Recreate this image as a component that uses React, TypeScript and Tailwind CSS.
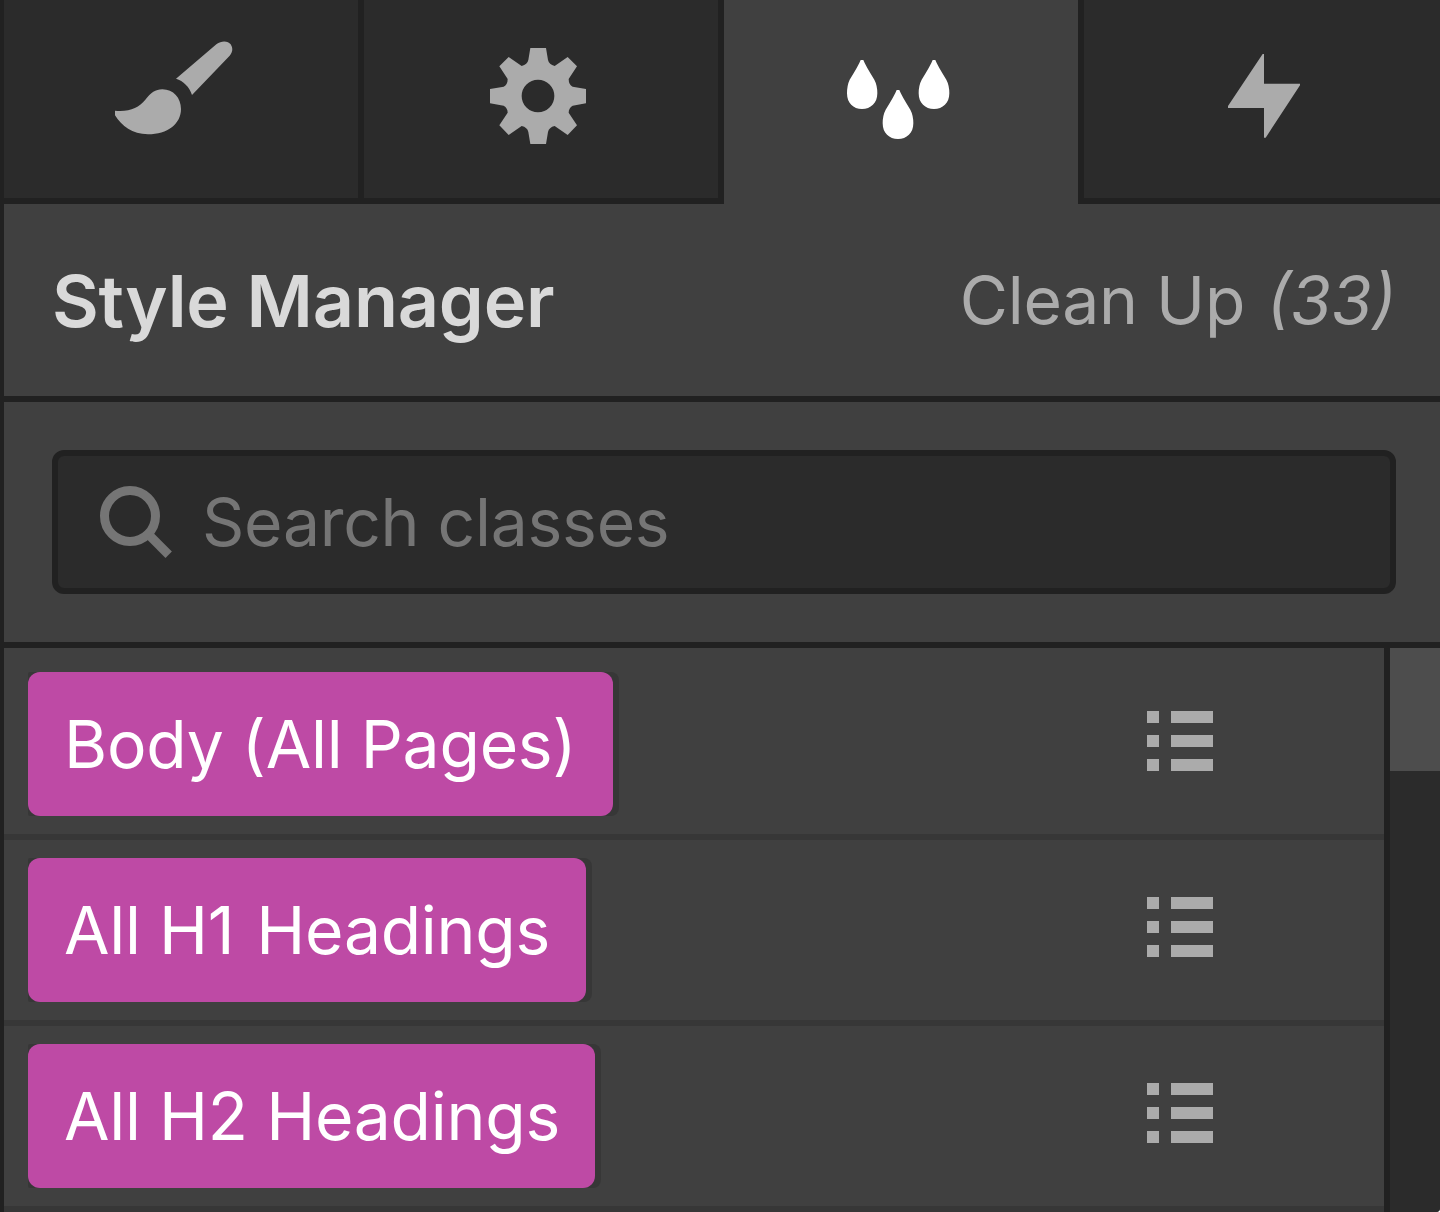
import React, { Fragment } from 'react';
import clsx from 'clsx';

interface StyleClass {
  id: number;
  name: string;
  width: number;
}

const classes: StyleClass[] = [
  { id: 1, name: 'Body (All Pages)', width: 585 },
  { id: 2, name: 'All H1 Headings', width: 558 },
  { id: 3, name: 'All H2 Headings', width: 567 },
];

const BrushIcon = () => (
  <svg viewBox="0 0 450 360" className="ml-[96px] mt-[30px] h-[120px] w-[150px]" fill="currentColor">
    <path d="M228 146L350 42C364 31 385 32 392 43C399 54 399 66 389 77L276 195C268 170 250 153 228 146Z" />
    <path d="M45 242C88 246 116 234 136 209C153 188 166 178 187 178C220 178 243 204 243 237C243 281 203 313 144 313C96 313 66 288 45 256Z" />
  </svg>
);

const GearIcon = () => (
  <svg viewBox="0 0 420 390" className="ml-[106px] mt-[30px] h-[130px] w-[140px]" fill="currentColor">
    <path
      fillRule="evenodd"
      d="M181 54H228L234 90Q237 104 254 108L293 81L321 109L296 147Q296 164 308 170L348 177V220L308 227Q296 234 296 248L321 286L293 315L254 288Q237 292 234 306L228 342H181L175 306Q172 292 155 288L116 315L88 286L113 248Q113 234 101 227L60 220V177L101 170Q113 164 113 147L88 109L116 81L155 108Q172 104 175 90ZM204 149A49 49 0 1 0 204 247A49 49 0 1 0 204 149Z"
    />
  </svg>
);

const DropsIcon = () => (
  <svg viewBox="0 0 420 360" className="ml-[106px] mt-[40px] h-[120px] w-[140px]" fill="currentColor">
    <path d="M92 60H100Q106 76 133 119Q142 136 142 160C142 190 122 207 96 207C70 207 51 190 51 160Q51 136 59 119Q86 76 92 60Z" />
    <path d="M308 60H316Q322 76 349 119Q358 136 358 160C358 190 338 207 312 207C286 207 266 190 266 160Q266 136 275 119Q302 76 308 60Z" />
    <path d="M200 150H208Q214 166 241 209Q250 226 250 250C250 280 230 297 204 297C178 297 158 280 158 250Q158 226 167 209Q194 166 200 150Z" />
  </svg>
);

const BoltIcon = () => (
  <svg viewBox="0 0 330 330" className="ml-[126px] mt-[40px] size-[110px]" fill="currentColor">
    <path d="M158 42H162V131H270V136L167 293H162V204H54V198Z" />
  </svg>
);

const SearchIcon = () => (
  <svg viewBox="0 0 72 72" className="size-[72px] shrink-0" fill="none" stroke="currentColor" strokeWidth="9">
    <circle cx="30" cy="30" r="25.5" />
    <path d="M50 50L68.7 68.7" />
  </svg>
);

const ListIcon = () => (
  <svg viewBox="0 0 66 60" className="h-[60px] w-[66px]" fill="currentColor">
    <path d="M0 0h12v12H0zM24 0h42v12H24zM0 24h12v12H0zM24 24h42v12H24zM0 48h12v12H0zM24 48h42v12H24z" />
  </svg>
);

const tabs = [
  { id: 'style', Icon: BrushIcon },
  { id: 'settings', Icon: GearIcon },
  { id: 'manager', Icon: DropsIcon },
  { id: 'interactions', Icon: BoltIcon },
];

const ClassRow = ({ item }: { item: StyleClass }) => (
  <div className="flex h-[186px] shrink-0 items-center justify-between border-b-6 border-[#373737] pl-6 pr-[171px]">
    <div className="rounded-l-[2px] rounded-r-[8px] bg-[#373737] pr-1.5">
      <div
        className="flex h-36 items-center whitespace-nowrap rounded-xl bg-[#be4aa5] pl-9 text-[66px] tracking-[-0.26px] text-white"
        style={{ width: item.width }}
      >
        <span>
          {item.name.split(' ').map((word, i) => (
            <Fragment key={i}>
              {i > 0 && ' '}
              <span className={clsx(word.endsWith('1') && 'mr-[3.5px]')}>{word}</span>
            </Fragment>
          ))}
        </span>
      </div>
    </div>
    <button className="pb-1.5 text-[#ababab]">
      <ListIcon />
    </button>
  </div>
);

export default function App() {
  const activeTab = 'manager';

  return (
    <div className="bg-white">
      <div className="flex h-[1212px] w-[1440px] flex-col overflow-hidden rounded-br-[4px] border-l-4 border-[#212121] bg-[#404040] font-[Inter,sans-serif]">
        <nav className="grid h-[204px] shrink-0 grid-cols-[360px_360px_354px_362px]">
          {tabs.map(({ id, Icon }) => (
            <button
              key={id}
              className={clsx(
                'flex items-start border-[#212121]',
                id === activeTab ? 'bg-[#404040] text-white' : 'border-b-6 bg-[#2b2b2b] text-[#ababab]',
                (id === 'style' || id === 'settings') && 'border-r-6',
                id === 'interactions' && 'border-l-6'
              )}
            >
              <Icon />
            </button>
          ))}
        </nav>

        <header className="flex h-[198px] shrink-0 items-center justify-between border-b-6 border-[#212121] pl-12 pr-11">
          <h1 className="pt-px text-[72px] font-semibold tracking-[-0.22px] text-[#d9d9d9]">Style Manager</h1>
          <button className="text-[66px] tracking-[-0.26px] text-[#ababab]">
            Clean Up <em className="ml-[3px] tracking-normal">(33)</em>
          </button>
        </header>

        <div className="h-[246px] shrink-0 border-b-6 border-[#212121] pl-12 pr-11 pt-12">
          <div className="flex h-36 items-center gap-[30px] rounded-[12px] border-6 border-[#212121] bg-[#2b2b2b] pl-[42px] text-[66px] tracking-[-0.28px] text-[#757575]">
            <SearchIcon />
            <span>Search classes</span>
          </div>
        </div>

        <div className="flex min-h-0 flex-1">
          <div className="flex flex-1 flex-col overflow-hidden pt-1.5">
            {classes.map((item) => (
              <ClassRow key={item.id} item={item} />
            ))}
          </div>
          <div className="w-14 border-l-6 border-[#212121] bg-[#2b2b2b]">
            <div className="h-[123px] bg-[#4d4d4d]" />
          </div>
        </div>
      </div>
    </div>
  );
}
